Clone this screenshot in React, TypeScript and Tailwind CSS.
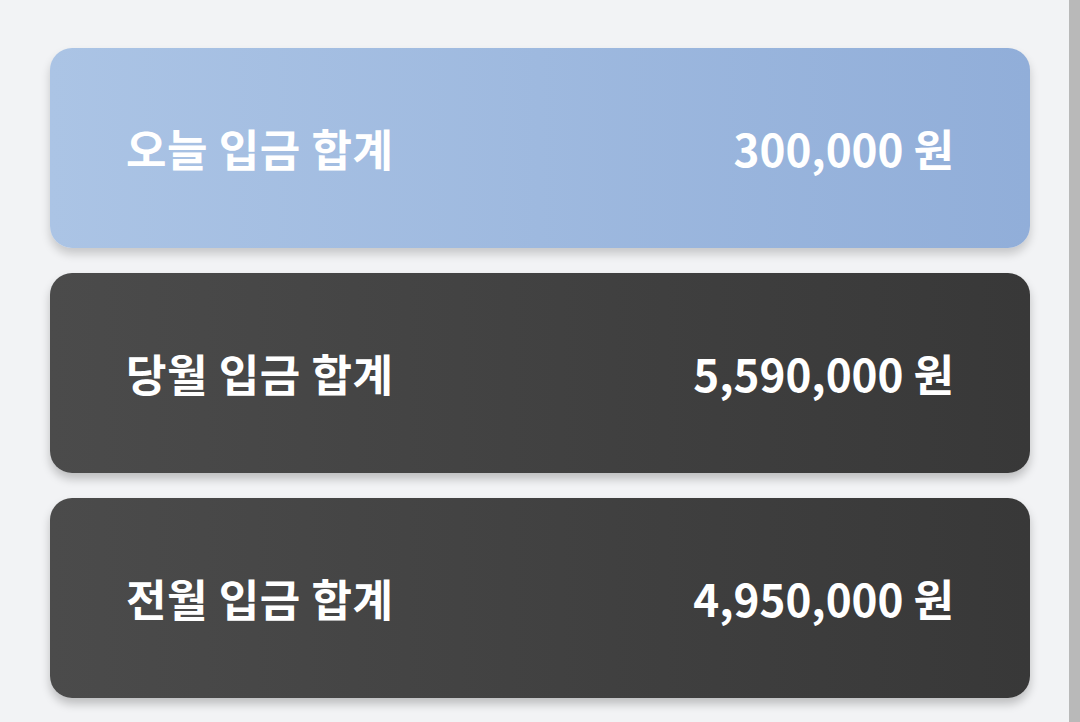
import React from "react";

const rows = [
  { label: "오늘 입금 합계", amount: "300,000 원", tone: "light" },
  { label: "당월 입금 합계", amount: "5,590,000 원", tone: "dark" },
  { label: "전월 입금 합계", amount: "4,950,000 원", tone: "dark" },
];

const App: React.FC = () => {
  return (
    <div
      className="flex w-[1080px] h-[722px] overflow-hidden bg-[#f2f3f5]"
      style={{ fontFamily: '"Noto Sans CJK KR", "Noto Sans", sans-serif' }}
    >
      <div className="flex-1 pt-[48px] pl-[50px]">
        <div className="flex flex-col gap-[25px] w-[980px]">
          {rows.map((row, i) => (
            <div
              key={i}
              className={
                row.tone === "light"
                  ? "h-[200px] rounded-[22px] flex items-center justify-between pl-[76px] pr-[76px] bg-gradient-to-r from-[#abc4e5] to-[#91aed9] shadow-[0_6px_10px_rgba(0,0,0,0.18)]"
                  : "h-[200px] rounded-[22px] flex items-center justify-between pl-[76px] pr-[76px] bg-gradient-to-r from-[#4b4b4b] to-[#383838] shadow-[0_6px_10px_rgba(0,0,0,0.22)]"
              }
            >
              <span className="text-white font-bold text-[44px] leading-none tracking-[0.6px]">{row.label}</span>
              <span className="text-white font-bold text-[44px] leading-none">{row.amount}</span>
            </div>
          ))}
        </div>
      </div>
      <div className="w-[11px] h-full bg-[#b9b9b9]" />
    </div>
  );
};

export default App;
